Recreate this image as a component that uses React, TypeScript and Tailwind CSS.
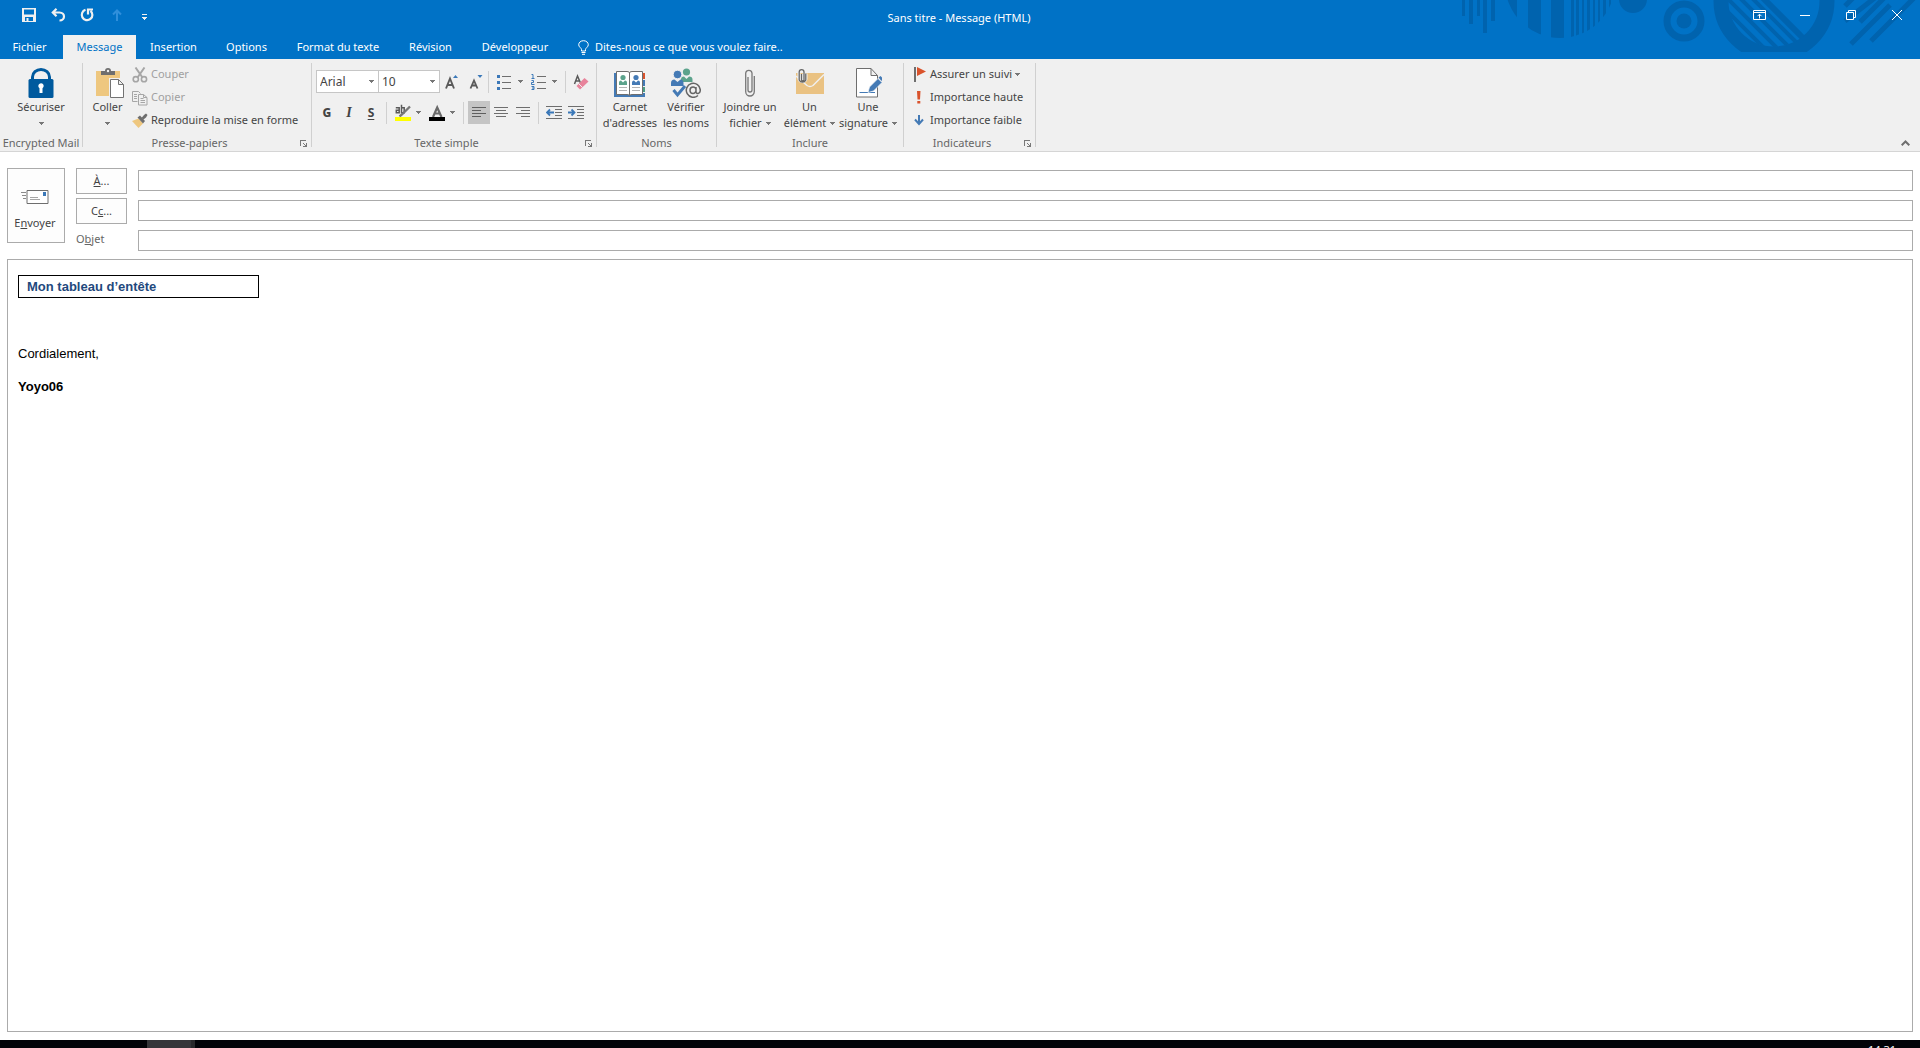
import React from 'react';

interface IconProps {
    className?: string;
}

const Caret: React.FC<IconProps> = ({ className = 'text-[#777777]' }) => (
    <svg width="5" height="3" viewBox="0 0 5 3" className={`shrink-0 ${className}`} shapeRendering="crispEdges" aria-hidden="true">
        <path d="M0 0h5v1h-1v1h-1v1h-1v-1h-1v-1h-1z" fill="currentColor" />
    </svg>
);

const SaveIcon = () => (
    <svg width="14" height="14" viewBox="0 0 14 14" fill="#f0f0f0" fillRule="evenodd" aria-hidden="true">
        <path d="M0 0h14v14h-14zM2 1.500v5h10v-5zM3 9v4h1.500v-3h2v3h4.500v-4z" />
    </svg>
);

const UndoIcon = () => (
    <svg width="15" height="14" viewBox="0 0 15 14" fill="none" stroke="#f0f0f0" strokeWidth="2.200" aria-hidden="true">
        <path d="M5.500 0.800 1.800 4.500 5.500 8.200M2 4.500h6.500c6 0 6 8 0 8" />
    </svg>
);

const RedoIcon = () => (
    <svg width="14" height="14" viewBox="0 0 14 14" fill="none" stroke="#f0f0f0" strokeWidth="2.200" aria-hidden="true">
        <path d="M5.500 1.800a5.300 5.300 0 1 0 5 1M8 6.500V1.500h5" />
    </svg>
);

const UpIcon = () => (
    <svg width="10" height="12" viewBox="0 0 10 12" fill="none" stroke="#2f8fdb" strokeWidth="2" aria-hidden="true">
        <path d="M5 12V2M1 5.500 5 1.500l4 4" />
    </svg>
);

const CustomizeIcon = () => (
    <svg width="5" height="6" viewBox="0 0 5 6" fill="#f0f0f0" shapeRendering="crispEdges" aria-hidden="true">
        <path d="M0 0h5v1h-5zM0 3h5v1h-1v1h-1v1h-1v-1h-1v-1h-1z" />
    </svg>
);

const BulbIcon = () => (
    <svg width="11" height="15" viewBox="0 0 11 15" fill="none" stroke="#ffffff" aria-hidden="true">
        <path d="M3.500 11V9.500C3.500 8 .700 7 .700 4.800.700 2.500 2.700.700 5.500.700s4.800 1.800 4.800 4.100c0 2.200-2.800 3.200-2.800 4.700V11zM3.500 12.500h4M4 14.300h3" />
    </svg>
);

const LockIcon = () => (
    <svg width="26" height="30" viewBox="0 0 26 30" aria-hidden="true">
        <path d="M4.500 13V9a8.500 7.500 0 0 1 17 0v4" fill="none" stroke="#005a9e" strokeWidth="3" />
        <rect x="0.500" y="11" width="25" height="19" rx="1.500" fill="#005a9e" />
        <path d="M10.300 18a2.700 2.700 0 1 1 4.200 2.200V25h-3v-4.800a2.700 2.700 0 0 1-1.200-2.200z" fill="#ffffff" />
    </svg>
);

const PasteIcon = () => (
    <svg width="32" height="30" viewBox="-4 0 32 30" aria-hidden="true">
        <path d="M0 3h24v25H0z" fill="#eec77f" />
        <path d="M5 7V3h4a3 3 0 0 1 6 0h4v4z" fill="#6e6e6e" />
        <circle cx="12" cy="3" r="1.200" fill="#f0f0f0" />
        <path d="M13 10h11v18H13z" fill="#f0f0f0" />
        <path d="M14.500 11.500h8l5 5v13h-13zM22.500 11.500v5h5" fill="#ffffff" stroke="#737373" />
    </svg>
);

const CutIcon = () => (
    <svg width="16" height="16" viewBox="0 0 16 16" fill="none" stroke="#a6a6a6" strokeWidth="1.600" aria-hidden="true">
        <path d="M3.500 0.500 10.500 10.500M12.500 0.500 5.500 10.500" strokeWidth="2" />
        <circle cx="3.800" cy="12.200" r="2.600" />
        <circle cx="12" cy="12.200" r="2.600" />
    </svg>
);

const CopyIcon = () => (
    <svg width="16" height="16" viewBox="0 0 16 16" fill="none" stroke="#a6a6a6" aria-hidden="true">
        <path d="M5.500 11.500h-5v-10h6l2 2M2 4.500h3M2 6.500h3M2 8.500h3" />
        <path d="M6.500 4.500h5l3.500 3v7.500H6.500zM11.500 4.500v3H15M8.500 8.500h3M8.500 10.500h4.500M8.500 12.500h4.500" />
    </svg>
);

const PainterIcon = () => (
    <svg width="16" height="16" viewBox="0 0 16 16" aria-hidden="true">
        <path d="M0 8 6.500 5.500 11 10.500 6.500 15z" fill="#eec77f" />
        <path d="M5.500 4.500 8 2.500l5 5.500-2 2.500z" fill="#6e6e6e" />
        <path d="M9.500 5 12 2l2-1.500 1.500 1.500-1.500 2.500-2.500 2z" fill="#6e6e6e" />
    </svg>
);

const LauncherIcon = () => (
    <svg width="7" height="7" viewBox="0 0 7 7" fill="#777777" shapeRendering="crispEdges" aria-hidden="true">
        <path d="M0 0h6v1h-5v5h-1zM3 3h1v1h1v1h1v-2h1v4h-4v-1h2v-1h-1v-1h-1z" />
    </svg>
);

const GrowIcon = () => (
    <svg width="14" height="16" viewBox="0 0 14 16" fill="none" aria-hidden="true">
        <path d="M1 14.500 5 4.500 9 14.500M2.500 11h5" stroke="#5a5a5a" strokeWidth="1.900" />
        <path d="M8 4 10.500 1 13 4z" fill="#3b78b8" />
    </svg>
);

const ShrinkIcon = () => (
    <svg width="14" height="16" viewBox="0 0 14 16" fill="none" aria-hidden="true">
        <path d="M1.500 14.500 5 6.500 8.500 14.500M2.500 11.500h5" stroke="#5a5a5a" strokeWidth="1.800" />
        <path d="M8.500 1h5L11 4z" fill="#3b78b8" />
    </svg>
);

const BulletsIcon = () => (
    <svg width="15" height="16" viewBox="0 0 15 16" aria-hidden="true">
        <path d="M5 2.500h9M5 8.500h9M5 14.500h9" stroke="#6e6e6e" />
        <path d="M0 1h3v3H0zM0 7h3v3H0zM0 13h3v3H0z" fill="#3b78b8" />
    </svg>
);

const NumbersIcon = () => (
    <svg width="15" height="16" viewBox="0 0 15 16" fill="none" aria-hidden="true">
        <path d="M6 2.500h9M6 8.500h9M6 14.500h9" stroke="#6e6e6e" />
        <path d="M0.500 .5H2V4.500M0.500 4.500h3M0.500 6.500h2v2h-2v2h3M0.500 12.500h2.500v3H0.500M1 14h2" stroke="#3b78b8" />
    </svg>
);

const EraserIcon = () => (
    <svg width="16" height="16" viewBox="0 0 16 16" fill="none" aria-hidden="true">
        <path d="M1.500 10 4.500 2 7.500 9M2.500 7h4.500" stroke="#5a5a5a" strokeWidth="1.500" />
        <path d="M3.500 12 11.500 4l4 3.500-8.500 8z" fill="#e8839b" />
        <path d="M5.500 9.500 9.500 13.500" stroke="#f0f0f0" />
    </svg>
);

const HighlightIcon = () => (
    <svg width="16" height="17" viewBox="0 0 16 17" fill="none" aria-hidden="true">
        <path d="M.8 3.700h3.400v5H1.300v-2.400H4M6.500 .8v7.900h2.700v-5H6.500" stroke="#5a5a5a" strokeWidth="1.500" />
        <path d="M15 2.500 7.500 10 4.500 12.500" stroke="#777777" strokeWidth="2.300" />
        <path d="M0 13h16v4H0z" fill="#ffff00" />
    </svg>
);

const FontColorIcon = () => (
    <svg width="16" height="17" viewBox="0 0 16 17" fill="none" aria-hidden="true">
        <path d="M4 13 8.200 3.500 12.500 13M5.500 9.500h5.500" stroke="#6a6a6a" strokeWidth="2.200" />
        <path d="M0 13h16v4H0z" fill="#000000" />
    </svg>
);

const AlignLeftIcon = () => (
    <svg width="14" height="11" viewBox="0 0 14 11" stroke="#5f5f5f" aria-hidden="true">
        <path d="M0 .5h14M0 3.500h9M0 6.500h14M0 9.500h9" />
    </svg>
);

const AlignCenterIcon = () => (
    <svg width="14" height="11" viewBox="0 0 14 11" stroke="#6e6e6e" aria-hidden="true">
        <path d="M0 .5h14M2 3.500h10M0 6.500h14M2 9.500h10" />
    </svg>
);

const AlignRightIcon = () => (
    <svg width="14" height="11" viewBox="0 0 14 11" stroke="#6e6e6e" aria-hidden="true">
        <path d="M0 .5h14M5 3.500h9M0 6.500h14M5 9.500h9" />
    </svg>
);

const OutdentIcon = () => (
    <svg width="16" height="13" viewBox="0 0 16 13" fill="none" stroke="#6e6e6e" aria-hidden="true">
        <path d="M0 .5h16M9 3.500h7M9 6.500h7M9 9.500h7M0 12.500h16" />
        <path d="M1 6.500h7M4 3.500 1 6.500l3 3" stroke="#3b78b8" strokeWidth="1.800" />
    </svg>
);

const IndentIcon = () => (
    <svg width="16" height="13" viewBox="0 0 16 13" fill="none" stroke="#6e6e6e" aria-hidden="true">
        <path d="M0 .5h16M9 3.500h7M9 6.500h7M9 9.500h7M0 12.500h16" />
        <path d="M0 6.500h6.500M3.500 3.500l3 3-3 3" stroke="#3b78b8" strokeWidth="1.800" />
    </svg>
);

const AddressBookIcon = () => (
    <svg width="32" height="30" viewBox="0 0 32 30" aria-hidden="true">
        <path d="M0 5h31v24H0z" fill="#447ab5" />
        <path d="M29 5h2v6h-2z" fill="#d9532c" />
        <path d="M29 19h2v5h-2z" fill="#4f9e85" />
        <path d="M28 11h3v1h-3zM28 18h3v1h-3zM28 24h3v1h-3z" fill="#f0f0f0" />
        <path d="M2.500 3.500H13q2.500 0 2.500 1.500 0-1.500 2.500-1.500h10.500v23H18q-2.500 0-2.500 1.500 0-1.500-2.500-1.500H2.500z" fill="#ffffff" stroke="#6e6e6e" />
        <path d="M15.500 5v22" stroke="#6e6e6e" />
        <circle cx="9" cy="9.500" r="2.600" fill="#5ca38c" />
        <path d="M5 17v-2.500q0-2 2-2l2 2 2-2q2 0 2 2V17z" fill="#5ca38c" />
        <circle cx="22" cy="9.500" r="2.600" fill="#447ab5" />
        <path d="M18 17v-2.500q0-2 2-2l2 2 2-2q2 0 2 2V17z" fill="#447ab5" />
        <path d="M5 19.500h8M5 22.500h8M18 19.500h8M18 22.500h8" stroke="#b4b4b4" />
    </svg>
);

const CheckNamesIcon = () => (
    <svg width="30" height="30" viewBox="0 0 30 30" fill="none" aria-hidden="true">
        <circle cx="15.500" cy="4" r="3.600" fill="#5ca38c" />
        <path d="M10 14v-2.500q0-3 3-3l2.500 2.500 2.500-2.500q3.500 0 3.500 3V14z" fill="#5ca38c" />
        <circle cx="6.500" cy="6.500" r="4.300" fill="#447ab5" stroke="#f0f0f0" />
        <path d="M0 18v-3q0-3.500 3.500-3.500L6.500 14l3-2.500q3 0 3 3.500v3z" fill="#447ab5" />
        <path d="M2.500 22 6.500 27 14 18" stroke="#447ab5" strokeWidth="3" />
        <path d="M27 27.500A7 7 0 1 1 29.300 22c0 4.500-4.300 4.500-4.300 1.500V19M25 22.200a3 3.300 0 1 1-6 0 3 3.300 0 0 1 6 0z" stroke="#666666" strokeWidth="1.500" />
    </svg>
);

const ClipIcon = () => (
    <svg width="10" height="28" viewBox="0 0 10 28" fill="none" stroke="#777777" strokeWidth="1.300" aria-hidden="true">
        <path d="M9.300 7v15.500a4.300 4.500 0 0 1-8.600 0V4a3.200 3.200 0 0 1 6.300 0v17a2 2 0 0 1-4 0V8" />
    </svg>
);

const ItemIcon = () => (
    <svg width="28" height="30" viewBox="0 0 28 30" fill="none" aria-hidden="true">
        <path d="M0 5h28v21H0z" fill="#eac282" />
        <path d="M0 8 11 17.500q3 2 6 0L28 6.500" stroke="#f0f0f0" strokeWidth="1.500" />
        <path d="M10 5.500V11a3.700 3.700 0 0 1-7 0V4a2.700 2.700 0 0 1 5.300 0v7.500a1.500 1.500 0 0 1-2.700 0V6" stroke="#f0f0f0" strokeWidth="3" />
        <path d="M9.800 5.500V12a3.600 3.600 0 0 1-6.600 0V4a2.400 2.400 0 0 1 4.800 0v8a1.300 1.300 0 0 1-2.500 0V6" stroke="#666666" strokeWidth="1.300" />
    </svg>
);

const SignatureIcon = () => (
    <svg width="28" height="30" viewBox="-2 0 28 30" fill="none" aria-hidden="true">
        <path d="M.5 .5h14.500l6.500 7v21.500H.5zM15 .5v7h6.500" fill="#ffffff" stroke="#6e6e6e" />
        <path d="M3.500 24.500H19" stroke="#447ab5" />
        <path d="M12 24.500 13.500 19 22 10.500l4 4L17.500 23z" fill="#447ab5" stroke="#f8f8f8" strokeWidth=".7" />
        <path d="M22.500 9.500 24.500 8 27 10.500 25.500 13z" fill="#447ab5" />
    </svg>
);

const FlagIcon = () => (
    <svg width="13" height="15" viewBox="0 0 13 15" aria-hidden="true">
        <path d="M0 0h2v15H0z" fill="#6e6e6e" />
        <path d="M3 0 12 4.500 3 9z" fill="#d9532c" />
    </svg>
);

const HighIcon = () => (
    <svg width="13" height="15" viewBox="0 0 13 15" fill="#d9532c" aria-hidden="true">
        <path d="M3 1h3.500l-.5 8.500h-2.500zM3.300 11h3v2.500h-3z" />
    </svg>
);

const LowIcon = () => (
    <svg width="13" height="15" viewBox="0 0 13 15" fill="none" stroke="#447ab5" strokeWidth="2" aria-hidden="true">
        <path d="M5 2v9M1 6.500l4 4.500 4-4.500" />
    </svg>
);

const SendIcon = () => (
    <svg width="28" height="14" viewBox="0 0 28 14" fill="none" aria-hidden="true">
        <path d="M6 .5h21v13H6z" fill="#ffffff" stroke="#6e6e6e" />
        <path d="M0 2.500h5M1 5.500h4M2 8.500h3" stroke="#8a8a8a" />
        <path d="M9 7.500h8M9 9.500h10" stroke="#a6a6a6" />
        <path d="M22 2h3v4h-3z" fill="#3b78b8" />
    </svg>
);

// Decorative circuit pattern drawn behind the window buttons
const TitlePattern = () => (
    <svg width="480" height="59" viewBox="0 0 480 59" className="pointer-events-none absolute top-0 right-0" fill="#0063ae" aria-hidden="true">
        <defs>
            <clipPath id="disc"><circle cx="120" cy="-17" r="55" /></clipPath>
            <clipPath id="band"><path d="M0 0h480v52H0z" /></clipPath>
            <clipPath id="ring"><circle cx="334" cy="1" r="46" /></clipPath>
        </defs>
        <path d="M22 0h3v16h-3zM29 0h4v24h-4zM37 0h3v16h-3zM43 0h4v33h-4zM51 0h4v21h-4z" />
        <path clipPath="url(#disc)" d="M64 0h13v38H64zM88 0h13v38H88zM111 0h13v38h-13zM131 0h3v38h-3zM136 0h3v38h-3zM142 0h2v38h-2zM147 0h3v38h-3zM153 0h2v38h-2zM158 0h2v38h-2zM163 0h3v38h-3zM169 0h2v38h-2z" />
        <circle cx="193" cy="-1" r="14" />
        <circle cx="244" cy="21" r="17" fill="none" stroke="#0063ae" strokeWidth="7" />
        <circle cx="244" cy="21" r="7.500" />
        <g clipPath="url(#band)">
            <circle cx="334" cy="1" r="53" fill="none" stroke="#0063ae" strokeWidth="15" />
            <path clipPath="url(#ring)" d="M276 0 334 58M284-5 342 53M292-10 350 48M300-14 358 44M308-17 366 41" stroke="#0063ae" strokeWidth="4" fill="none" />
            <path clipPath="url(#ring)" d="M301-24 371 46" stroke="#0063ae" strokeWidth="6" fill="none" />
        </g>
        <path d="M414-3 405 6M436-3 405 21M452-10 420 22M450 5 411 44M478-6 431 41" stroke="#0063ae" strokeWidth="5" fill="none" />
    </svg>
);

const tabs = [
    { label: 'Insertion', width: 'w-[75px]' },
    { label: 'Options', width: 'w-[71px]' },
    { label: 'Format du texte', width: 'w-28' },
    { label: 'Révision', width: 'w-[73px]' },
    { label: 'Développeur', width: 'w-24' },
];

const Divider: React.FC<IconProps> = ({ className = '' }) => <span className={`h-[22px] w-px shrink-0 bg-[#d0d0d0] ${className}`} />;

interface GroupProps {
    label: string;
    width: string;
    launcher?: boolean;
    children: React.ReactNode;
}

const Group: React.FC<GroupProps> = ({ label, width, launcher, children }) => (
    <section aria-label={label} className={`my-1 flex shrink-0 flex-col border-r border-[#d0d0d0] ${width}`}>
        <div className="flex h-[72px] shrink-0 items-start">{children}</div>
        <div className="-mb-1 flex h-4 shrink-0 items-center">
            <span className="flex-1 text-center whitespace-nowrap text-[#666666]">{label}</span>
            {launcher && (
                <button type="button" aria-label={`Options ${label}`} className="flex w-[15px] justify-start pl-1">
                    <LauncherIcon />
                </button>
            )}
        </div>
    </section>
);

interface BigButtonProps {
    icon: React.ReactNode;
    line1: string;
    line2?: string;
    caret?: boolean;
    width: string;
}

const BigButton: React.FC<BigButtonProps> = ({ icon, line1, line2, caret, width }) => (
    <button type="button" className={`flex shrink-0 flex-col items-center whitespace-nowrap ${width}`}>
        <span className="flex h-9 items-center pt-1">{icon}</span>
        <span className="leading-4">{line1}</span>
        <span className="flex h-4 items-center gap-1 leading-4">
            {line2}
            {caret && <Caret />}
        </span>
    </button>
);

interface SmallButtonProps {
    icon: React.ReactNode;
    label: string;
    caret?: boolean;
    disabled?: boolean;
}

const SmallButton: React.FC<SmallButtonProps> = ({ icon, label, caret, disabled }) => (
    <button type="button" disabled={disabled} className="flex h-[23px] items-center gap-[3px] whitespace-nowrap disabled:text-[#a0a0a0]">
        {icon}
        <span>{label}</span>
        {caret && <Caret />}
    </button>
);

interface ToolProps {
    label: string;
    className?: string;
    children: React.ReactNode;
}

const Tool: React.FC<ToolProps> = ({ label, className = 'w-[22px]', children }) => (
    <button type="button" aria-label={label} className={`flex h-[23px] shrink-0 items-center justify-center ${className}`}>
        {children}
    </button>
);

interface PickerProps {
    label: string;
    value: string;
    width: string;
}

const Picker: React.FC<PickerProps> = ({ label, value, width }) => (
    <div className={`relative h-[23px] border border-[#c6c6c6] bg-white ${width}`}>
        <select aria-label={label} defaultValue={value} className="block h-full w-full appearance-none pl-[3px] text-[12px] leading-5 text-[#444444] outline-none">
            <option>{value}</option>
        </select>
        <span className="pointer-events-none absolute inset-y-0 right-1 flex items-center"><Caret /></span>
    </div>
);

const TitleBar = () => (
    <header className="relative h-[59px] shrink-0 bg-[#0072c6] text-white">
        <TitlePattern />
        <div className="relative flex h-[35px] items-start justify-between">
            <div className="flex h-[30px] flex-1 items-center pl-[22px]">
                <button type="button" aria-label="Enregistrer" className="w-[29px]"><SaveIcon /></button>
                <button type="button" aria-label="Annuler" className="w-[29px]"><UndoIcon /></button>
                <button type="button" aria-label="Rétablir" className="w-8"><RedoIcon /></button>
                <button type="button" aria-label="Élément précédent" className="w-[30px]"><UpIcon /></button>
                <button type="button" aria-label="Personnaliser" className="pt-1"><CustomizeIcon /></button>
            </div>
            <h1 className="pt-[10px] leading-4">Sans titre - Message (HTML)</h1>
            <div className="flex h-[30px] flex-1 items-center justify-end pl-6">
                <button type="button" aria-label="Options d'affichage du ruban" className="flex w-[46px] justify-center">
                    <svg width="13" height="10" viewBox="0 0 13 10" fill="none" stroke="#ffffff" aria-hidden="true">
                        <path d="M.5 .5h12v9H.5zM.5 2.500h12M6.500 8.500v-4M4.500 6.200l2-2 2 2" />
                    </svg>
                </button>
                <button type="button" aria-label="Réduire" className="flex w-[46px] justify-center">
                    <svg width="10" height="1" viewBox="0 0 10 1" fill="#ffffff" aria-hidden="true"><path d="M0 0h10v1H0z" /></svg>
                </button>
                <button type="button" aria-label="Restaurer" className="flex w-[46px] justify-center">
                    <svg width="10" height="10" viewBox="0 0 10 10" fill="none" stroke="#ffffff" aria-hidden="true">
                        <path d="M.5 2.500h7v7h-7zM2.500 2.500v-2h7v7h-2" />
                    </svg>
                </button>
                <button type="button" aria-label="Fermer" className="flex w-[46px] justify-center">
                    <svg width="10" height="10" viewBox="0 0 10 10" stroke="#ffffff" aria-hidden="true"><path d="M0 0 10 10M10 0 0 10" /></svg>
                </button>
            </div>
        </div>
        <nav className="relative flex h-6 items-stretch whitespace-nowrap">
            <button type="button" className="w-[63px] pr-1">Fichier</button>
            <button type="button" className="w-[73px] bg-[#f0f0f0] text-[#0072c6]">Message</button>
            {tabs.map(tab => (
                <button key={tab.label} type="button" className={tab.width}>{tab.label}</button>
            ))}
            <button type="button" className="ml-[15px] flex items-center gap-[6px]">
                <BulbIcon />
                Dites-nous ce que vous voulez faire..
            </button>
        </nav>
    </header>
);

const Ribbon = () => (
    <div className="relative flex h-[93px] shrink-0 border-b border-[#d5d5d5] bg-[#f0f0f0] text-[#444444]">
        <Group label="Encrypted Mail" width="w-[83px]">
            <BigButton icon={<LockIcon />} line1="Sécuriser" caret width="w-[82px]" />
        </Group>

        <Group label="Presse-papiers" width="w-[229px]" launcher>
            <BigButton icon={<PasteIcon />} line1="Coller" caret width="w-[49px]" />
            <div className="flex flex-col items-start">
                <SmallButton icon={<CutIcon />} label="Couper" disabled />
                <SmallButton icon={<CopyIcon />} label="Copier" disabled />
                <SmallButton icon={<PainterIcon />} label="Reproduire la mise en forme" />
            </div>
        </Group>

        <Group label="Texte simple" width="w-[285px]" launcher>
            <div className="flex flex-col gap-2 pt-[7px] pl-1">
                <div className="flex items-center">
                    <Picker label="Police" value="Arial" width="w-[63px]" />
                    <Picker label="Taille" value="10" width="-ml-px w-[62px]" />
                    <Tool label="Agrandir la police" className="w-6"><GrowIcon /></Tool>
                    <Tool label="Réduire la police" className="w-6"><ShrinkIcon /></Tool>
                    <Divider />
                    <Tool label="Puces" className="ml-1 w-[34px] gap-[6px]"><BulletsIcon /><Caret /></Tool>
                    <Tool label="Numérotation" className="w-[34px] gap-[6px]"><NumbersIcon /><Caret /></Tool>
                    <Divider className="mx-1" />
                    <Tool label="Effacer la mise en forme"><EraserIcon /></Tool>
                </div>
                <div className="flex items-center">
                    <Tool label="Gras"><span className="text-[12px] font-extrabold">G</span></Tool>
                    <Tool label="Italique"><span className="font-['Liberation_Serif',serif] text-[14px] font-bold italic">I</span></Tool>
                    <Tool label="Souligné"><span className="text-[12px] font-bold underline underline-offset-2">S</span></Tool>
                    <Divider className="mx-1" />
                    <Tool label="Surlignage" className="w-[34px] gap-[5px]"><HighlightIcon /><Caret /></Tool>
                    <Tool label="Couleur de police" className="w-[34px] gap-[5px]"><FontColorIcon /><Caret /></Tool>
                    <Divider className="mx-1" />
                    <Tool label="Aligner à gauche" className="w-[22px] bg-[#c5c5c5]"><AlignLeftIcon /></Tool>
                    <Tool label="Centrer"><AlignCenterIcon /></Tool>
                    <Tool label="Aligner à droite"><AlignRightIcon /></Tool>
                    <Divider className="mx-1" />
                    <Tool label="Diminuer le retrait"><OutdentIcon /></Tool>
                    <Tool label="Augmenter le retrait"><IndentIcon /></Tool>
                </div>
            </div>
        </Group>

        <Group label="Noms" width="w-[120px]">
            <BigButton icon={<AddressBookIcon />} line1="Carnet" line2="d'adresses" width="w-[66px]" />
            <BigButton icon={<CheckNamesIcon />} line1="Vérifier" line2="les noms" width="w-[46px]" />
        </Group>

        <Group label="Inclure" width="w-[187px]">
            <BigButton icon={<ClipIcon />} line1="Joindre un" line2="fichier" caret width="w-[66px]" />
            <BigButton icon={<ItemIcon />} line1="Un" line2="élément" caret width="w-[53px]" />
            <BigButton icon={<SignatureIcon />} line1="Une" line2="signature" caret width="w-[64px]" />
        </Group>

        <Group label="Indicateurs" width="w-[132px]" launcher>
            <div className="flex flex-col items-start pl-[10px]">
                <SmallButton icon={<FlagIcon />} label="Assurer un suivi" caret />
                <SmallButton icon={<HighIcon />} label="Importance haute" />
                <SmallButton icon={<LowIcon />} label="Importance faible" />
            </div>
        </Group>

        <button type="button" aria-label="Réduire le ruban" className="mt-auto mr-[10px] mb-[5px] ml-auto">
            <svg width="9" height="6" viewBox="0 0 9 6" fill="none" stroke="#6e6e6e" strokeWidth="2" aria-hidden="true">
                <path d="M.7 5.300 4.500 1.500l3.800 3.800" />
            </svg>
        </button>
    </div>
);

const fieldClass = 'h-[21px] w-full border border-[#ababab] bg-white px-1 outline-none';
const recipientClass = 'mt-[3px] h-[26px] w-[51px] border border-[#ababab] bg-[#fdfdfd]';

const Composer = () => (
    <main className="flex flex-1 flex-col gap-1 bg-white px-[7px] pt-[13px] pb-2 text-[#444444]">
        <div className="flex gap-[11px]">
            <button type="button" className="mt-[3px] flex h-[75px] w-[58px] flex-col items-center border border-[#ababab] bg-[#fdfdfd] pt-[21px] pr-[2px]">
                <SendIcon />
                <span className="mt-[11px] leading-4">E<u>n</u>voyer</span>
            </button>
            <div className="grid flex-1 grid-cols-[51px_1fr] items-center gap-x-[11px]">
                <div className="flex h-[30px] items-start"><button type="button" className={recipientClass}><u>À</u>...</button></div>
                <input type="text" aria-label="À" className={fieldClass} />
                <div className="flex h-[30px] items-start"><button type="button" className={recipientClass}>C<u>c</u>...</button></div>
                <input type="text" aria-label="Cc" className={fieldClass} />
                <label htmlFor="subject" className="h-[30px] leading-7 text-[#666666]">O<u>b</u>jet</label>
                <input id="subject" type="text" className={fieldClass} />
            </div>
        </div>

        <article className="flex-1 border border-[#ababab] px-[10px] py-[15px] font-['Liberation_Sans',Arial,sans-serif] text-[13px] leading-4 text-black">
            <table className="h-[23px] w-[241px] border-collapse border border-black">
                <tbody>
                    <tr><td className="px-2 py-0 font-bold text-[#1f497d]">Mon tableau d’entête</td></tr>
                </tbody>
            </table>
            <p className="mt-12">Cordialement,</p>
            <p className="mt-[17px] font-bold">Yoyo06</p>
        </article>
    </main>
);

const Taskbar = () => (
    <footer className="flex h-2 shrink-0 justify-between overflow-hidden bg-[#020308] text-white">
        <span className="ml-[147px] h-2 w-12 border-r-4 border-[#28282b] bg-[#353539]" />
        <time className="mr-6 pt-[2px] leading-4">14:31</time>
    </footer>
);

const App: React.FC = () => (
    <div className="flex h-screen flex-col overflow-hidden bg-white font-['Noto_Sans','Open_Sans',sans-serif] text-[11px]">
        <TitleBar />
        <Ribbon />
        <Composer />
        <Taskbar />
    </div>
);

export default App;
